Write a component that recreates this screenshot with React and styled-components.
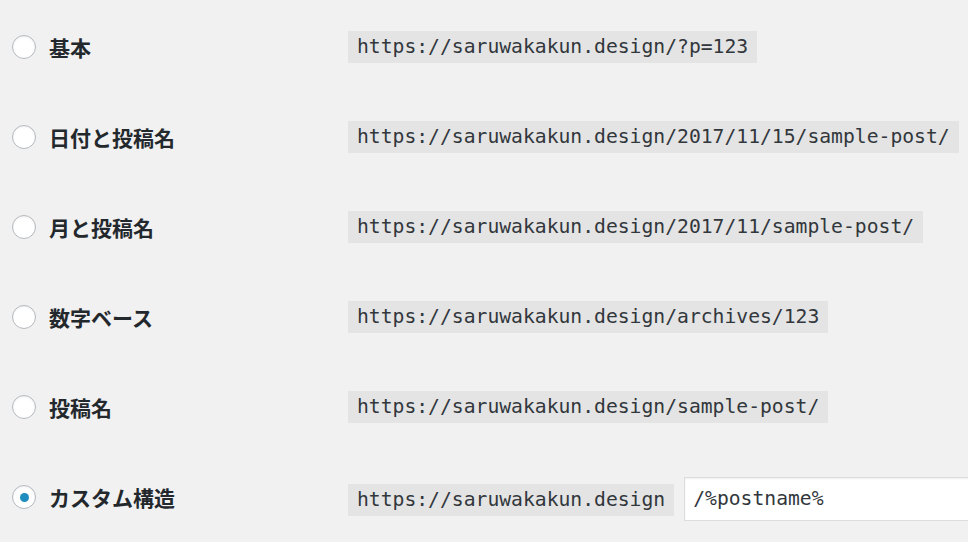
import React from 'react';
import styled, { createGlobalStyle } from 'styled-components';

const GlobalStyle = createGlobalStyle`
  html, body {
    margin: 0;
    padding: 0;
    background: #f1f1f1;
    overflow: hidden;
  }
`;

const Page = styled.div`
  width: 968px;
  height: 542px;
  padding: 2px 0 0 12px;
  box-sizing: border-box;
  background: #f1f1f1;
  overflow: hidden;
`;

const Row = styled.label`
  display: grid;
  grid-template-columns: 336px auto;
  align-items: center;
  height: 90px;
`;

const Choice = styled.div`
  display: flex;
  align-items: center;
  gap: 13px;
`;

const Radio = styled.span`
  width: 24px;
  height: 24px;
  box-sizing: border-box;
  border-radius: 50%;
  border: 1px solid #b4b9be;
  background: #fff;
  box-shadow: inset 0 1px 2px rgba(0, 0, 0, 0.07);
  display: flex;
  align-items: center;
  justify-content: center;
  &::after {
    content: '';
    display: ${(p) => (p.checked ? 'block' : 'none')};
    width: 9px;
    height: 9px;
    border-radius: 50%;
    background: #1e8cbe;
  }
`;

const Label = styled.span`
  font-family: 'Noto Sans CJK JP', 'Noto Sans', sans-serif;
  font-weight: 700;
  font-size: 21px;
  color: #23282d;
  line-height: 1;
`;

const Sample = styled.div`
  display: flex;
  align-items: center;
  gap: 10px;
  padding-top: ${(p) => (p.custom ? '6px' : '0')};
`;

const Code = styled.code`
  font-family: 'DejaVu Sans Mono', 'Liberation Mono', monospace;
  font-size: 19.7px;
  color: #32373c;
  background: #e4e4e4;
  padding: 0 9px;
  height: 32px;
  line-height: 32px;
  white-space: nowrap;
  display: inline-block;
`;

const Input = styled.input`
  font-family: 'DejaVu Sans Mono', 'Liberation Mono', monospace;
  font-size: 19.7px;
  color: #32373c;
  width: 320px;
  height: 44px;
  margin-top: -3px;
  box-sizing: border-box;
  border: 1px solid #ddd;
  background: #fff;
  box-shadow: inset 0 1px 2px rgba(0, 0, 0, 0.07);
  padding: 0 8px;
  outline: none;
`;

const base = 'https://saruwakakun.design';

const options = [
  { label: '基本', code: base + '/?p=123' },
  { label: '日付と投稿名', code: base + '/2017/11/15/sample-post/' },
  { label: '月と投稿名', code: base + '/2017/11/sample-post/' },
  { label: '数字ベース', code: base + '/archives/123' },
  { label: '投稿名', code: base + '/sample-post/' },
  { label: 'カスタム構造', code: base, custom: '/%postname%', checked: true },
];

const App = () => (
  <>
    <GlobalStyle />
    <Page>
      {options.map((o) => (
        <Row key={o.label}>
          <Choice>
            <Radio checked={o.checked} />
            <Label>{o.label}</Label>
          </Choice>
          <Sample custom={!!o.custom}>
            <Code>{o.code}</Code>
            {o.custom && <Input defaultValue={o.custom} />}
          </Sample>
        </Row>
      ))}
    </Page>
  </>
);

export default App;
